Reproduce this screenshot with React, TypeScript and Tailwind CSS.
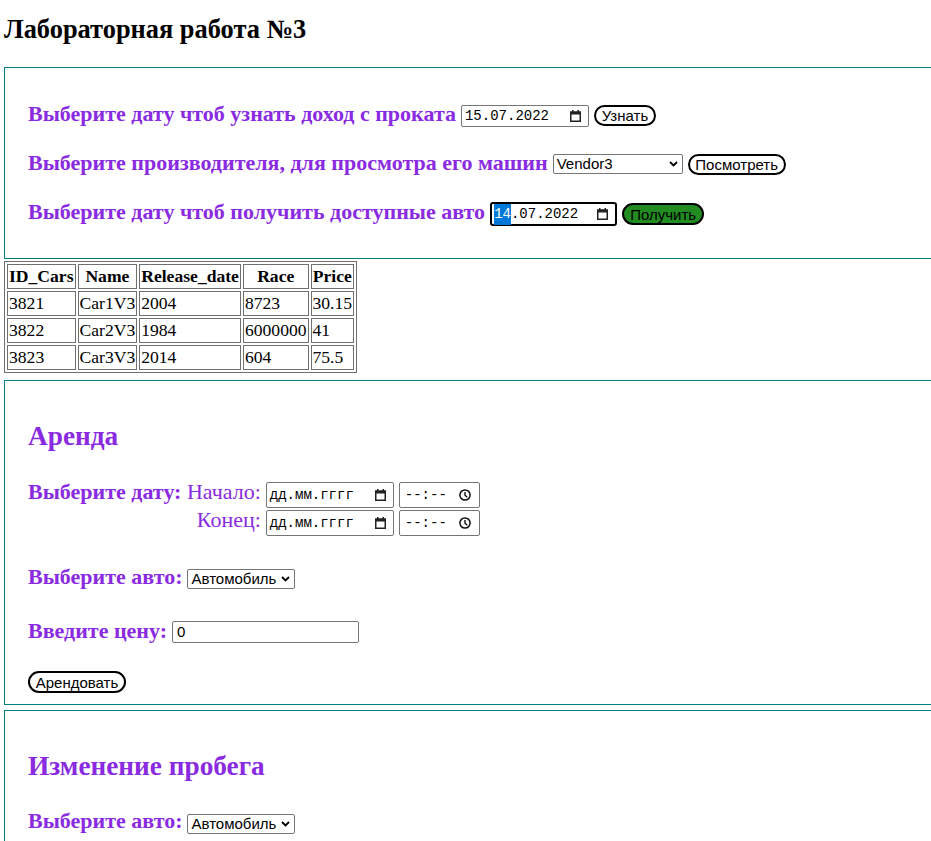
import React from "react";

function CalendarIcon() {
  return (
    <svg width="11" height="12" viewBox="0 0 11 12" className="shrink-0">
      <rect x="0.75" y="2.25" width="9.5" height="9" fill="none" stroke="#222" strokeWidth="1.5" />
      <rect x="0" y="1.5" width="11" height="3" fill="#222" />
      <rect x="2" y="0" width="1.5" height="2" fill="#222" />
      <rect x="7.5" y="0" width="1.5" height="2" fill="#222" />
    </svg>
  );
}

function ClockIcon() {
  return (
    <svg width="12" height="12" viewBox="0 0 12 12" className="shrink-0">
      <circle cx="6" cy="6" r="5.1" fill="none" stroke="#111" strokeWidth="1.5" />
      <path d="M6 3 V6.2 L8.2 8.2" fill="none" stroke="#111" strokeWidth="1.4" />
    </svg>
  );
}

function Chevron() {
  return (
    <svg width="9" height="6" viewBox="0 0 9 6" className="shrink-0">
      <path d="M1 1 L4.5 4.5 L8 1" fill="none" stroke="#000" strokeWidth="1.8" />
    </svg>
  );
}

function DateBox({
  children,
  w,
  h,
  focused,
}: {
  children: React.ReactNode;
  w: string;
  h: string;
  focused?: boolean;
}) {
  return (
    <div
      className={
        (focused
          ? "border-2 border-black rounded-[3px] pl-[2px] "
          : "border border-[#767676] rounded-[2px] pl-[3px] ") +
        w +
        " " +
        h +
        " flex items-center justify-between pr-[7px] bg-white font-['Liberation_Mono',monospace] text-[14px] text-black shrink-0"
      }
    >
      <span className="flex items-center">{children}</span>
      <CalendarIcon />
    </div>
  );
}

function TimeBox() {
  return (
    <div className="w-[81px] h-[26px] border border-[#767676] rounded-[2px] pl-[5px] pr-[8px] flex items-center justify-between bg-white font-['Liberation_Mono',monospace] text-[14px] text-black shrink-0 mt-[3px]">
      <span>--:--</span>
      <ClockIcon />
    </div>
  );
}

function SelectBox({ label, w, mt }: { label: string; w: string; mt: string }) {
  return (
    <div
      className={
        w +
        " " +
        mt +
        " h-[20px] border border-[#767676] rounded-[2px] pl-[3px] pr-[4px] flex items-center justify-between bg-white font-['Liberation_Sans',Arial,sans-serif] text-[15px] text-black shrink-0"
      }
    >
      <span className="leading-[18px] whitespace-nowrap">{label}</span>
      <Chevron />
    </div>
  );
}

function Btn({
  label,
  w,
  h,
  green,
  mt,
}: {
  label: string;
  w: string;
  h: string;
  green?: boolean;
  mt?: string;
}) {
  return (
    <div
      className={
        w +
        " " +
        h +
        " " +
        (mt ?? "") +
        " " +
        (green ? "bg-[#228b22] " : "bg-white ") +
        "border-2 border-black rounded-full flex items-center justify-center font-['Liberation_Sans',Arial,sans-serif] text-[15px] text-black shrink-0 leading-none whitespace-nowrap"
      }
    >
      {label}
    </div>
  );
}

const label = "text-[22px] leading-[26px] font-bold text-[#8a2be2] whitespace-nowrap";
const h2c = "text-[27.3px] leading-[30px] font-bold text-[#8a2be2]";
const box = "ml-[4px] border border-r-0 border-[#008080] pl-[23px]";
const cell = "border border-[#707070] px-[1px] py-[1px] leading-[21px] text-left font-normal";
const head = "border border-[#707070] px-[1px] py-[1px] leading-[21px] text-center font-bold";

const rows = [
  ["3821", "Car1V3", "2004", "8723", "30.15"],
  ["3822", "Car2V3", "1984", "6000000", "41"],
  ["3823", "Car3V3", "2014", "604", "75.5"],
];

export default function App() {
  return (
    <div className="min-h-screen w-full overflow-hidden bg-white font-['Liberation_Serif',serif] text-black">
      <h2 className="pl-[4px] pt-[14px] text-[26.4px] leading-[30px] font-bold">Лабораторная работа №3</h2>

      <div className={box + " mt-[23px] pt-[33px] pb-[33px] flex flex-col gap-[23px]"}>
        <div className="flex items-start h-[26px] gap-[5px]">
          <span className={label}>Выберите дату чтоб узнать доход с проката</span>
          <div className="mt-[4px]">
            <DateBox w="w-[128px]" h="h-[22px]">15.07.2022</DateBox>
          </div>
          <Btn label="Узнать" w="w-[62px]" h="h-[21px]" mt="mt-[4px]" />
        </div>
        <div className="flex items-start h-[26px] gap-[5px]">
          <span className={label}>Выберите производителя, для просмотра его машин</span>
          <SelectBox label="Vendor3" w="w-[130px]" mt="mt-[4px]" />
          <Btn label="Посмотреть" w="w-[98px]" h="h-[21px]" mt="mt-[4px]" />
        </div>
        <div className="flex items-start h-[26px] gap-[5px]">
          <span className={label}>Выберите дату чтоб получить доступные авто</span>
          <div className="mt-[3px]">
            <DateBox w="w-[127px]" h="h-[24px]" focused>
              <span className="bg-[#0078d7] text-white">14</span>
              <span>.07.2022</span>
            </DateBox>
          </div>
          <Btn label="Получить" w="w-[82px]" h="h-[22px]" mt="mt-[4px]" green />
        </div>
      </div>

      <table className="ml-[4px] mt-[2px] border border-[#707070] border-separate border-spacing-[2px] text-[17.6px]">
        <thead>
          <tr>
            <th className={head}>ID_Cars</th>
            <th className={head}>Name</th>
            <th className={head}>Release_date</th>
            <th className={head}>Race</th>
            <th className={head}>Price</th>
          </tr>
        </thead>
        <tbody>
          {rows.map((r) => (
            <tr key={r[0]}>
              {r.map((c, i) => (
                <td key={i} className={cell}>
                  {c}
                </td>
              ))}
            </tr>
          ))}
        </tbody>
      </table>

      <div className={box + " mt-[7px] pt-[40px] pb-[11px] flex flex-col"}>
        <h2 className={h2c}>Аренда</h2>
        <div className="mt-[28px] grid grid-cols-[max-content_max-content] gap-x-[5px]">
          <div className="h-[28px] justify-self-end text-[22px] leading-[26px] text-[#8a2be2] whitespace-nowrap">
            <span className="font-bold">Выберите дату:</span> Начало:
          </div>
          <div className="h-[28px] flex items-start gap-[5px]">
            <div className="mt-[3px]">
              <DateBox w="w-[128px]" h="h-[26px]">дд.мм.гггг</DateBox>
            </div>
            <TimeBox />
          </div>
          <div className="h-[28px] justify-self-end text-[22px] leading-[26px] text-[#8a2be2] whitespace-nowrap">
            Конец:
          </div>
          <div className="h-[28px] flex items-start gap-[5px]">
            <div className="mt-[3px]">
              <DateBox w="w-[128px]" h="h-[26px]">дд.мм.гггг</DateBox>
            </div>
            <TimeBox />
          </div>
        </div>
        <div className="mt-[29px] flex items-start h-[26px] gap-[5px]">
          <span className={label}>Выберите авто:</span>
          <SelectBox label="Автомобиль" w="w-[108px]" mt="mt-[5px]" />
        </div>
        <div className="mt-[28px] flex items-start h-[26px] gap-[5px]">
          <span className={label}>Введите цену:</span>
          <div className="mt-[3px] w-[187px] h-[22px] border border-[#767676] rounded-[2px] pl-[4px] flex items-center bg-white font-['Liberation_Sans',Arial,sans-serif] text-[15px] text-black">
            0
          </div>
        </div>
        <div className="mt-[27px] flex">
          <Btn label="Арендовать" w="w-[98px]" h="h-[22px]" />
        </div>
      </div>

      <div className={box + " mt-[5px] pt-[40px] pb-[40px] flex flex-col"}>
        <h2 className={h2c}>Изменение пробега</h2>
        <div className="mt-[27px] flex items-start h-[26px] gap-[5px]">
          <span className={label}>Выберите авто:</span>
          <SelectBox label="Автомобиль" w="w-[108px]" mt="mt-[6px]" />
        </div>
      </div>
    </div>
  );
}
